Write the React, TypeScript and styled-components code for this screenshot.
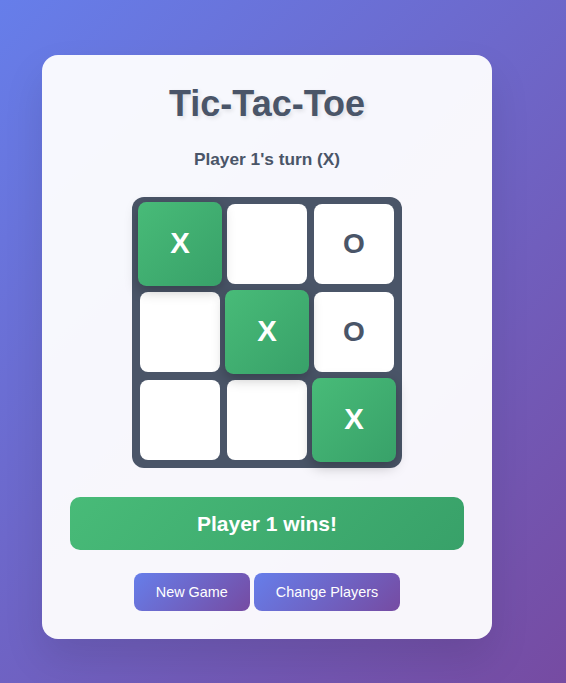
import React from 'react';
import styled, { createGlobalStyle } from 'styled-components';

type Mark = 'X' | 'O' | null;

const board: Mark[] = ['X', null, 'O', null, 'X', 'O', null, null, 'X'];
const winLine = [0, 4, 8];

const App: React.FC = () => {
    return (
        <>
            <GlobalStyle />
            <Page>
                <Card>
                    <Title>Tic-Tac-Toe</Title>
                    <Status>Player 1's turn (X)</Status>

                    <Board>
                        {board.map((mark, i) => (
                            <Cell key={i} $win={winLine.includes(i)} $mark={mark}>
                                {mark}
                            </Cell>
                        ))}
                    </Board>

                    <WinMessage>Player 1 wins!</WinMessage>

                    <Controls>
                        <Button>New Game</Button>
                        <Button>Change Players</Button>
                    </Controls>
                </Card>
            </Page>
        </>
    );
};

export default App;

// Styled Components
const GlobalStyle = createGlobalStyle`
  * {
    box-sizing: border-box;
  }

  body {
    margin: 0;
    font-family: "Liberation Sans", Arial, sans-serif;
    background: linear-gradient(135deg, #667eea 0%, #764ba2 100%);
    min-height: 100vh;
  }
`;

const Page = styled.div`
  min-height: 100vh;
  display: flex;
  align-items: flex-start;
  padding: 55px 0 0 42px;
`;

const Card = styled.div`
  width: 450px;
  padding: 28px;
  display: flex;
  flex-direction: column;
  align-items: center;
  background: rgba(255, 255, 255, 0.95);
  border-radius: 16px;
  box-shadow: 0 20px 40px rgba(0, 0, 0, 0.1);
`;

const Title = styled.h1`
  margin: 0 0 24px;
  font-size: 36px;
  font-weight: bold;
  color: #4a5568;
  text-shadow: 2px 2px 4px rgba(0, 0, 0, 0.1);
`;

const Status = styled.p`
  margin: 0 0 27px;
  font-size: 17.3px;
  font-weight: bold;
  color: #4a5568;
`;

const Board = styled.div`
  display: grid;
  grid-template-columns: repeat(3, 80px);
  grid-auto-rows: 80px;
  gap: 8px 7px;
  padding: 7px 8px 8px;
  background: #4a5568;
  border-radius: 12px;
`;

const Cell = styled.div<{ $win: boolean; $mark: Mark }>`
  display: flex;
  align-items: center;
  justify-content: center;
  border-radius: 8px;
  font-size: 28px;
  font-weight: bold;
  background: ${(p) => (p.$win ? 'linear-gradient(135deg, #48bb78, #38a169)' : '#ffffff')};
  color: ${(p) => (p.$win ? '#ffffff' : '#4a5568')};
  transform: ${(p) => (p.$win ? 'scale(1.05)' : 'none')};
  box-shadow: ${(p) => (p.$win ? '0 4px 12px rgba(0, 0, 0, 0.25)' : 'none')};
`;

const WinMessage = styled.div`
  width: 100%;
  margin-top: 29px;
  padding: 14px;
  text-align: center;
  font-size: 21px;
  line-height: 25px;
  font-weight: bold;
  color: #ffffff;
  background: linear-gradient(135deg, #48bb78, #38a169);
  border-radius: 10px;
`;

const Controls = styled.div`
  display: flex;
  justify-content: center;
  gap: 4px;
  margin-top: 23px;
`;

const Button = styled.button`
  padding: 11px 22px;
  font-family: "Liberation Sans", Arial, sans-serif;
  font-size: 14.4px;
  color: #ffffff;
  border: none;
  border-radius: 8px;
  background: linear-gradient(135deg, #667eea, #764ba2);
  cursor: pointer;
`;
